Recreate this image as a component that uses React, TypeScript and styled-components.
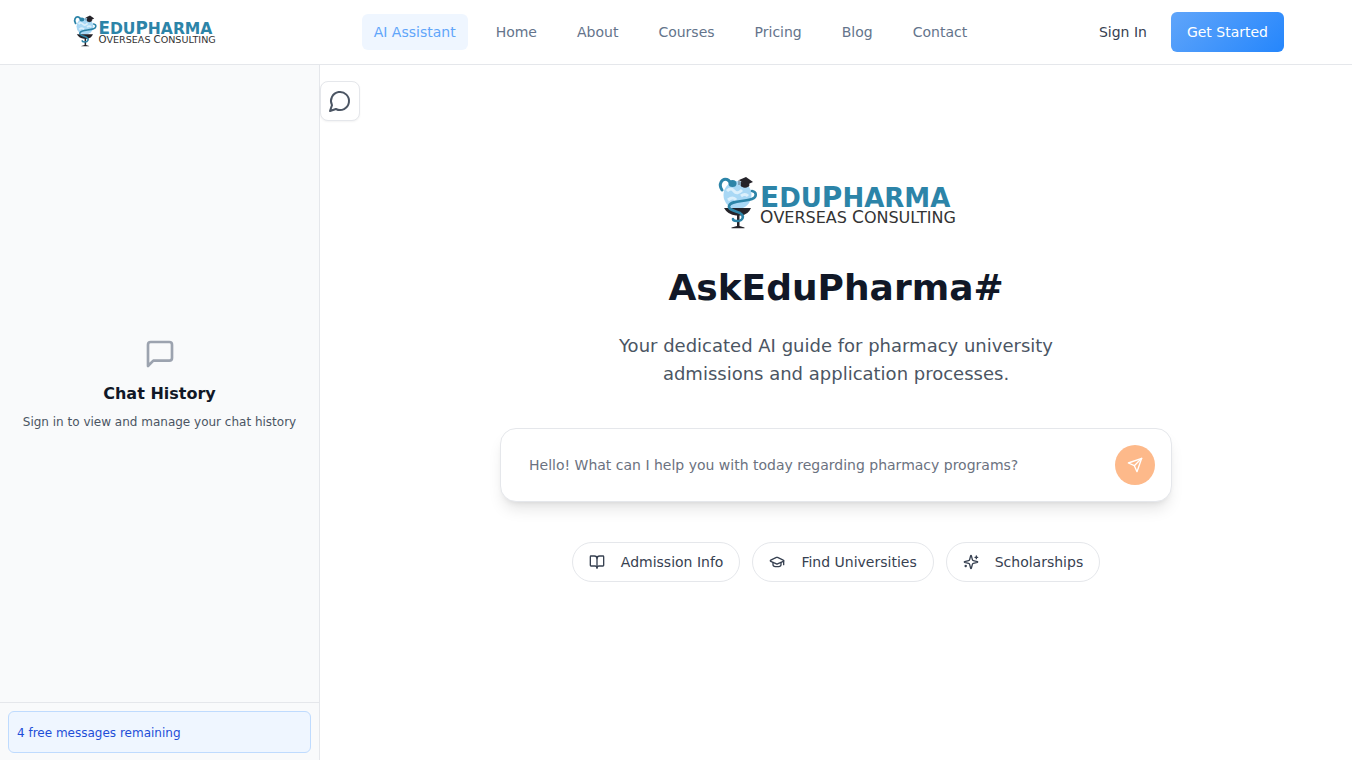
import React from "react";
import styled, { createGlobalStyle, css } from "styled-components";

const GlobalStyle = createGlobalStyle`
  *, *::before, *::after { box-sizing: border-box; }
  html, body, #root { height: 100%; }
  body {
    margin: 0;
    background: #fff;
    color: #111827;
    font-family: "DejaVu Sans", sans-serif;
    font-size: 14px;
    line-height: 20px;
  }
  button, input { font: inherit; }
  h1, h2, p { margin: 0; }
`;

const Page = styled.div`
  display: flex;
  flex-direction: column;
  min-height: 100%;
`;

const Header = styled.header`
  border-bottom: 1px solid #e5e7eb;
  background: #fff;
`;

const HeaderInner = styled.div`
  display: flex;
  align-items: center;
  justify-content: space-between;
  max-width: 1280px;
  height: 64px;
  margin: 0 auto;
  padding: 0 32px;
`;

const LogoLink = styled.a`
  display: flex;
  min-width: 190px;
  padding-left: 4px;
`;

const LogoSvg = styled.svg<{ $width: number }>`
  display: block;
  width: ${(p) => p.$width}px;
  height: auto;
  overflow: visible;
`;

const Nav = styled.nav`
  display: flex;
  gap: 16px;
`;

const NavLink = styled.a<{ $active?: boolean }>`
  padding: 8px 12px;
  border-radius: 6px;
  color: #64748b;
  text-decoration: none;
  ${(p) =>
    p.$active &&
    css`
      background: #eff6ff;
      color: #60a5fa;
    `}
`;

const Account = styled.div`
  display: flex;
  align-items: center;
  gap: 8px;
`;

const SignIn = styled.a`
  padding: 10px 16px;
  color: #374151;
  text-decoration: none;
`;

const GetStarted = styled.button`
  height: 40px;
  padding: 0 16px;
  border: 0;
  border-radius: 6px;
  background: linear-gradient(135deg, #60a5fa, #2586fc);
  color: #fff;
`;

const Body = styled.div`
  display: flex;
  flex: 1;
`;

const Sidebar = styled.aside`
  display: flex;
  flex-direction: column;
  flex: 0 0 320px;
  border-right: 1px solid #e5e7eb;
  background: #f9fafb;
`;

const History = styled.section`
  display: flex;
  flex: 1;
  flex-direction: column;
  align-items: center;
  justify-content: center;
  padding: 16px;
  text-align: center;
  color: #9ca3af;
`;

const HistoryTitle = styled.h2`
  margin: 12px 0 8px;
  color: #111827;
  font-size: 16px;
  font-weight: 600;
  line-height: 24px;
`;

const HistoryText = styled.p`
  color: #4b5563;
  font-size: 12px;
  line-height: 16px;
`;

const Quota = styled.div`
  padding: 8px 8px 7px;
  border-top: 1px solid #e5e7eb;
`;

const QuotaBox = styled.p`
  padding: 13px 8px 11px;
  border: 1px solid #bfdbfe;
  border-radius: 6px;
  background: #eff6ff;
  color: #1d4ed8;
  font-size: 12px;
  line-height: 16px;
`;

const Main = styled.main`
  display: flex;
  flex: 1;
  flex-direction: column;
  padding: 16px 0;
`;

const ChatToggle = styled.button`
  display: flex;
  align-items: center;
  justify-content: center;
  width: 40px;
  height: 40px;
  padding: 0;
  border: 1px solid #e5e7eb;
  border-radius: 8px;
  background: #fff;
  box-shadow: 0 1px 2px rgba(0, 0, 0, 0.05);
  color: #4b5563;
`;

const Hero = styled.div`
  display: flex;
  flex-direction: column;
  align-items: center;
  width: 100%;
  max-width: 704px;
  margin: 0 auto;
  padding: 55px 16px;
`;

const Title = styled.h1`
  margin-top: 36px;
  font-size: 36px;
  font-weight: 700;
  line-height: 40px;
`;

const Lead = styled.p`
  max-width: 448px;
  margin-top: 24px;
  color: #4b5563;
  font-size: 18px;
  line-height: 28px;
  text-align: center;
`;

const Prompt = styled.form`
  display: flex;
  align-items: center;
  width: 100%;
  margin-top: 40px;
  padding: 16px;
  border: 1px solid #e5e7eb;
  border-radius: 16px;
  background: #fff;
  box-shadow: 0 10px 15px -3px rgba(0, 0, 0, 0.1), 0 4px 6px -4px rgba(0, 0, 0, 0.1);
`;

const PromptInput = styled.input`
  flex: 1;
  min-width: 0;
  height: 40px;
  padding: 0 12px;
  border: 0;
  outline: 0;
  background: transparent;
  color: #111827;
  &::placeholder { color: #6b7280; opacity: 1; }
`;

const SendButton = styled.button`
  display: flex;
  align-items: center;
  justify-content: center;
  width: 40px;
  height: 40px;
  padding: 0;
  border: 0;
  border-radius: 50%;
  background: #fdb98a;
  color: #fff;
`;

const Suggestions = styled.div`
  display: flex;
  flex-wrap: wrap;
  justify-content: center;
  gap: 12px;
  margin-top: 40px;
`;

const Suggestion = styled.button`
  display: flex;
  align-items: center;
  gap: 16px;
  height: 40px;
  padding: 0 16px;
  border: 1px solid #e5e7eb;
  border-radius: 20px;
  background: #fff;
  color: #374151;
`;

const iconPaths = {
  circle: ["M7.9 20A9 9 0 1 0 4 16.1L2 22Z"],
  square: ["M21 15a2 2 0 0 1-2 2H7l-4 4V5a2 2 0 0 1 2-2h14a2 2 0 0 1 2 2z"],
  send: ["m22 2-7 20-4-9-9-4Z", "M22 2 11 13"],
  book: [
    "M12 7v14",
    "M3 18a1 1 0 0 1-1-1V4a1 1 0 0 1 1-1h5a4 4 0 0 1 4 4 4 4 0 0 1 4-4h5a1 1 0 0 1 1 1v13a1 1 0 0 1-1 1h-6a3 3 0 0 0-3 3 3 3 0 0 0-3-3z",
  ],
  cap: [
    "M21.42 10.922a1 1 0 0 0-.019-1.838L12.83 5.18a2 2 0 0 0-1.66 0L2.6 9.08a1 1 0 0 0 0 1.832l8.57 3.908a2 2 0 0 0 1.66 0z",
    "M22 10v6",
    "M6 12.5V16a6 3 0 0 0 12 0v-3.5",
  ],
  sparkles: [
    "M9.937 15.5A2 2 0 0 0 8.5 14.063l-6.135-1.582a.5.5 0 0 1 0-.962L8.5 9.936A2 2 0 0 0 9.937 8.5l1.582-6.135a.5.5 0 0 1 .963 0L14.063 8.5A2 2 0 0 0 15.5 9.937l6.135 1.581a.5.5 0 0 1 0 .964L15.5 14.063a2 2 0 0 0-1.437 1.437l-1.582 6.135a.5.5 0 0 1-.963 0z",
    "M20 3v4",
    "M22 5h-4",
    "M4 17v2",
    "M5 18H3",
  ],
};

function Icon({ name, size = 16 }: { name: keyof typeof iconPaths; size?: number }) {
  return (
    <svg
      width={size}
      height={size}
      viewBox="0 0 24 24"
      fill="none"
      stroke="currentColor"
      strokeWidth="2"
      strokeLinecap="round"
      strokeLinejoin="round"
      aria-hidden="true"
    >
      {iconPaths[name].map((d) => (
        <path key={d} d={d} />
      ))}
    </svg>
  );
}

function Logo({ width }: { width: number }) {
  return (
    <LogoSvg $width={width} viewBox="-3 0 240 56" role="img" aria-label="EduPharma Overseas Consulting">
      {/* globe */}
      <circle cx="18.500" cy="19" r="14" fill="#a9d8f5" />
      <path d="M8 15q4-4 7 0t8-1M9 24q5-4 8 0M22 20q4-3 7 0" fill="none" stroke="#dcf0fc" strokeWidth="3" />
      {/* glass */}
      <path d="M5 32h27q-3 7-10 7.500h-5Q9 39 5 32z" fill="#252329" />
      <path d="M18 38h2.500v12l5 1.500v.8H12.500v-.8L18 50z" fill="#252329" />
      {/* serpent */}
      <path
        d="M3 14C-1 8 3 2 8 3.500c3 1 3 4 6 5"
        fill="none"
        stroke="#2c84a8"
        strokeWidth="3"
        strokeLinecap="round"
      />
      <path
        d="M33 15c5 1 5 6 0 8-8 3-21 1-23 7-1 4 7 5 11 7 5 3 3 8-3 8-3 0-4-1-4-2"
        fill="none"
        stroke="#2c84a8"
        strokeWidth="2.600"
        strokeLinecap="round"
      />
      <ellipse cx="13.500" cy="7.500" rx="4" ry="3.500" fill="#2c84a8" />
      {/* mortarboard */}
      <path d="m20 4 7-3 7 5-7 3z" fill="#252329" />
      <path d="M22 6v4q4 3 8 0V7zM20 4v5" fill="#252329" stroke="#252329" strokeWidth="0.600" />
      <text x="41" y="31" fill="#2c84a8" fontFamily="DejaVu Sans, sans-serif" fontWeight="700" fontSize="26">
        <tspan fontSize="28">E</tspan>DU<tspan fontSize="28">P</tspan>HARMA
      </text>
      <text x="41" y="47" fill="#333" fontFamily="DejaVu Sans, sans-serif" fontSize="16">
        <tspan fontSize="17">O</tspan>VERSEAS <tspan fontSize="17">C</tspan>ONSULTING
      </text>
    </LogoSvg>
  );
}

const links = ["AI Assistant", "Home", "About", "Courses", "Pricing", "Blog", "Contact"];

export default function App() {
  return (
    <Page>
      <GlobalStyle />
      <Header>
        <HeaderInner>
          <LogoLink href="#">
            <Logo width={144} />
          </LogoLink>
          <Nav>
            {links.map((label, i) => (
              <NavLink key={label} href="#" $active={i === 0}>
                {label}
              </NavLink>
            ))}
          </Nav>
          <Account>
            <SignIn href="#">Sign In</SignIn>
            <GetStarted type="button">Get Started</GetStarted>
          </Account>
        </HeaderInner>
      </Header>
      <Body>
        <Sidebar>
          <History>
            <Icon name="square" size={32} />
            <HistoryTitle>Chat History</HistoryTitle>
            <HistoryText>Sign in to view and manage your chat history</HistoryText>
          </History>
          <Quota>
            <QuotaBox>4 free messages remaining</QuotaBox>
          </Quota>
        </Sidebar>
        <Main>
          <ChatToggle type="button" aria-label="Toggle chat history">
            <Icon name="circle" size={24} />
          </ChatToggle>
          <Hero>
            <Logo width={240} />
            <Title>AskEduPharma#</Title>
            <Lead>Your dedicated AI guide for pharmacy university admissions and application processes.</Lead>
            <Prompt onSubmit={(e) => e.preventDefault()}>
              <PromptInput
                aria-label="Message"
                placeholder="Hello! What can I help you with today regarding pharmacy programs?"
              />
              <SendButton type="submit" aria-label="Send">
                <Icon name="send" />
              </SendButton>
            </Prompt>
            <Suggestions>
              <Suggestion type="button">
                <Icon name="book" />
                Admission Info
              </Suggestion>
              <Suggestion type="button">
                <Icon name="cap" />
                Find Universities
              </Suggestion>
              <Suggestion type="button">
                <Icon name="sparkles" />
                Scholarships
              </Suggestion>
            </Suggestions>
          </Hero>
        </Main>
      </Body>
    </Page>
  );
}
